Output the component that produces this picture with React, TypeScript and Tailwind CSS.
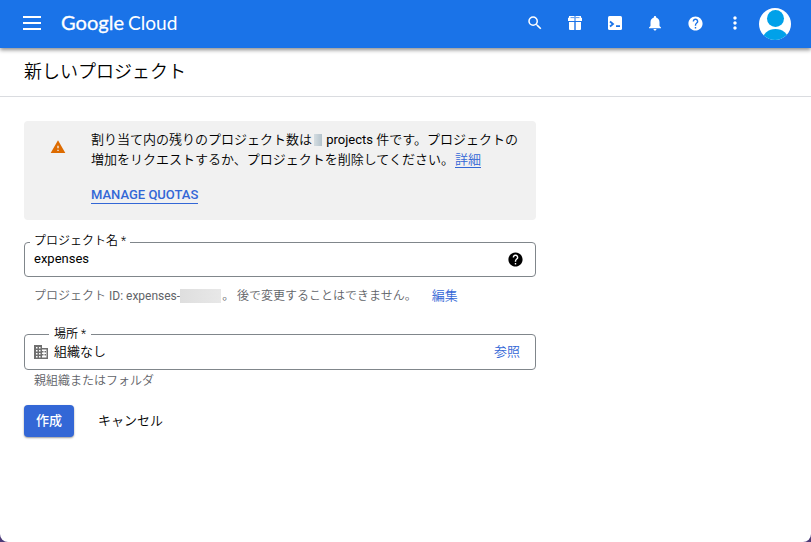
import React from 'react';

function Icon({ d, size = 16, className = '' }: { d: string; size?: number; className?: string }) {
  return (
    <svg viewBox="0 0 24 24" width={size} height={size} fill="currentColor" className={`block shrink-0 ${className}`}>
      <path fillRule="evenodd" d={d} />
    </svg>
  );
}

const search =
  'M15.5 14h-.79l-.28-.27A6.471 6.471 0 0 0 16 9.5 6.5 6.5 0 1 0 9.5 16c1.61 0 3.09-.59 4.23-1.57l.27.28v.79l5 4.99L20.49 19l-4.99-5zm-6 0C7.01 14 5 11.99 5 9.5S7.01 5 9.5 5 14 7.01 14 9.5 11.99 14 9.5 14z';
const bell =
  'M12 22c1.1 0 2-.9 2-2h-4c0 1.1.89 2 2 2zm6-6v-5c0-3.07-1.64-5.64-4.5-6.32V4c0-.83-.67-1.5-1.5-1.5s-1.5.67-1.5 1.5v.68C7.63 5.36 6 7.92 6 11v5l-2 2v1h16v-1l-2-2z';
const help =
  'M12 2C6.48 2 2 6.48 2 12s4.48 10 10 10 10-4.48 10-10S17.52 2 12 2zm1 17h-2v-2h2v2zm2.07-7.75l-.9.92C13.45 12.9 13 13.5 13 15h-2v-.5c0-1.1.45-2.1 1.17-2.83l1.24-1.26c.37-.36.59-.86.59-1.41 0-1.1-.9-2-2-2s-2 .9-2 2H8c0-2.21 1.79-4 4-4s4 1.79 4 4c0 .88-.36 1.68-.93 2.25z';
const more =
  'M12 8c1.1 0 2-.9 2-2s-.9-2-2-2-2 .9-2 2 .9 2 2 2zm0 2c-1.1 0-2 .9-2 2s.9 2 2 2 2-.9 2-2-.9-2-2-2zm0 6c-1.1 0-2 .9-2 2s.9 2 2 2 2-.9 2-2-.9-2-2-2z';
const warning = 'M1 21h22L12 2 1 21zm12-3h-2v-2h2v2zm0-4h-2v-4h2v4z';

function Header() {
  return (
    <header className="z-10 flex h-12 shrink-0 items-center bg-[#1a73e8] text-white shadow-[0_2px_4px_rgba(0,0,0,0.45)]">
      <button aria-label="menu" className="ml-[23px] mb-0.5 flex w-[18px] flex-col gap-1">
        <span className="h-0.5 bg-white" />
        <span className="h-0.5 bg-white" />
        <span className="h-0.5 bg-white" />
      </button>
      <svg className="ml-5 block h-12 w-[122px]" viewBox="0 0 122 48" fill="white" fontFamily="Lato, sans-serif" fontSize="20">
        <text x="0" y="30" textLength="63" lengthAdjust="spacingAndGlyphs" stroke="white" strokeWidth="0.3">Google</text>
        <text x="67" y="30" textLength="49.5" lengthAdjust="spacingAndGlyphs">Cloud</text>
      </svg>
      <nav className="mb-0.5 ml-auto grid grid-cols-[repeat(6,40px)] justify-items-center items-center">
        <Icon d={search} size={18} />
        <svg viewBox="0 0 14 14" width="14" height="14" fill="currentColor" className="block">
          <path d="M1 0h5l1 1 1-1h5v1.500l1 .5v3H0V2l1-.5z" />
          <path d="M1 6h5.300v8H2a1 1 0 0 1-1-1zM7.700 6H13v7a1 1 0 0 1-1 1H7.700z" />
          <path d="M2.500 1.600h9" stroke="#1a73e8" strokeWidth="0.7" />
          <path d="M7 2v3.500" stroke="#1a73e8" strokeWidth="1" />
        </svg>
        <svg viewBox="0 0 14 14" width="14" height="14" className="block">
          <rect width="14" height="14" rx="1.5" fill="white" />
          <path d="M2 5.500l3 2.500L2 10.500M8 10.200h4" fill="none" stroke="#1a73e8" strokeWidth="1.8" />
        </svg>
        <Icon d={bell} size={18} />
        <Icon d={help} size={17} />
        <Icon d={more} size={20} />
      </nav>
      <svg viewBox="0 0 32 32" width="32" height="32" className="ml-1 mr-5 block">
        <defs>
          <clipPath id="avatar">
            <circle cx="16" cy="16" r="16" />
          </clipPath>
        </defs>
        <g clipPath="url(#avatar)">
          <rect width="32" height="32" fill="white" />
          <circle cx="16.500" cy="10.500" r="8.500" fill="#00a1e9" />
          <ellipse cx="16.500" cy="32" rx="13" ry="11" fill="#00a1e9" />
        </g>
      </svg>
    </header>
  );
}

function Notice() {
  return (
    <section className="flex h-[99px] rounded bg-[#f1f1f1] text-[13px] leading-5">
      <Icon d={warning} size={16} className="ml-[26px] mt-[18px] text-[#dd6b00]" />
      <div className="ml-[25px] mt-[9px] whitespace-nowrap">
        <p>
          割り当て内の残りのプロジェクト数は
          <span className="ml-0.5 mr-px inline-block h-3 w-2 bg-linear-to-r from-[#d5dde1] to-[#b4c3cc] align-[-2px]" />
          <span className="font-normal"> projects </span>
          件です。プロジェクトの
        </p>
        <p>
          増加をリクエストするか、プロジェクトを削除してください。
          <a className="ml-px inline-block h-[18px] border-b border-[#3367d6] align-top text-[#3367d6]">詳細</a>
        </p>
        <a className="mt-[17px] inline-block h-[17px] border-b border-[#3367d6] font-medium leading-4 text-[#3367d6]">MANAGE QUOTAS</a>
      </div>
    </section>
  );
}

export default function App() {
  return (
    <div className="h-[542px] w-[811px] overflow-hidden bg-[#4c3b78]">
      <div className="flex h-full flex-col overflow-hidden rounded-b-lg bg-white font-[Roboto,'Noto_Sans_CJK_JP',sans-serif] text-black">
        <Header />
        <div className="flex h-[49px] shrink-0 items-center border-b border-[#dadce0] pl-6">
          <h1 className="text-lg font-[350] leading-6">新しいプロジェクト</h1>
        </div>
        <main className="ml-6 mt-6 flex w-[512px] flex-col font-[350]">
          <Notice />
          <div className="relative mt-[22px] flex h-[35px] items-center justify-between rounded border border-[#80868b] pl-[9px] pr-[11px]">
            <label className="absolute -top-[11px] left-[5px] bg-white px-1 text-xs leading-[18px]">プロジェクト名 *</label>
            <span className="mb-px text-[13px] font-normal">expenses</span>
            <Icon d={help} size={17} className="mb-px" />
          </div>
          <div className="mt-[9px] flex h-5 items-center whitespace-pre pl-[10px] text-xs text-[#5f6368]">
            <span>プロジェクト</span>
            <span className="font-normal"> ID: expenses-</span>
            <span className="h-[14px] w-[41px] bg-linear-to-r from-[#dedede] to-[#e8e8e8]" />
            <span className="ml-px">。 後で変更することはできません。</span>
            <a className="ml-[15px] text-[13px] text-[#3367d6]">編集</a>
          </div>
          <div className="relative mt-7 flex h-9 items-center rounded border border-[#80868b] pl-[9px] pr-[15px] text-[13px]">
            <label className="absolute -top-[10px] left-6 bg-white px-[5px] text-xs leading-[18px]">場所 *</label>
            <svg viewBox="0 0 14 14" width="14" height="14" className="mr-1.5 block shrink-0">
              <path
                fill="#707070"
                fillRule="evenodd"
                d="M0 0h8v3h6v11H0zM2 2v1.500h1.500V2zM5 2v1.500h1.500V2zM2 5v1.500h1.500V5zM5 5v1.500h1.500V5zM2 8v1.500h1.500V8zM5 8v1.500h1.500V8zM2 11v1.500h1.500V11zM5 11v1.500h1.500V11zM8 4.500V6h1.500v1.500H8V9h1.500v1.500H8v2h4.500v-8zM10.500 6H12v1.500h-1.500zM10.500 9H12v1.500h-1.500z"
              />
            </svg>
            <span>組織なし</span>
            <a className="ml-auto text-[#3367d6]">参照</a>
          </div>
          <p className="mt-px h-5 pl-[10px] text-xs leading-5 text-[#5f6368]">親組織またはフォルダ</p>
          <div className="mt-[14px] flex items-center gap-6 text-[13px]">
            <button className="h-8 w-[50px] rounded bg-[#3367d6] pb-px font-medium text-white shadow-[0_1px_2px_rgba(0,0,0,0.4)]">作成</button>
            <button className="pb-px">キャンセル</button>
          </div>
        </main>
      </div>
    </div>
  );
}
